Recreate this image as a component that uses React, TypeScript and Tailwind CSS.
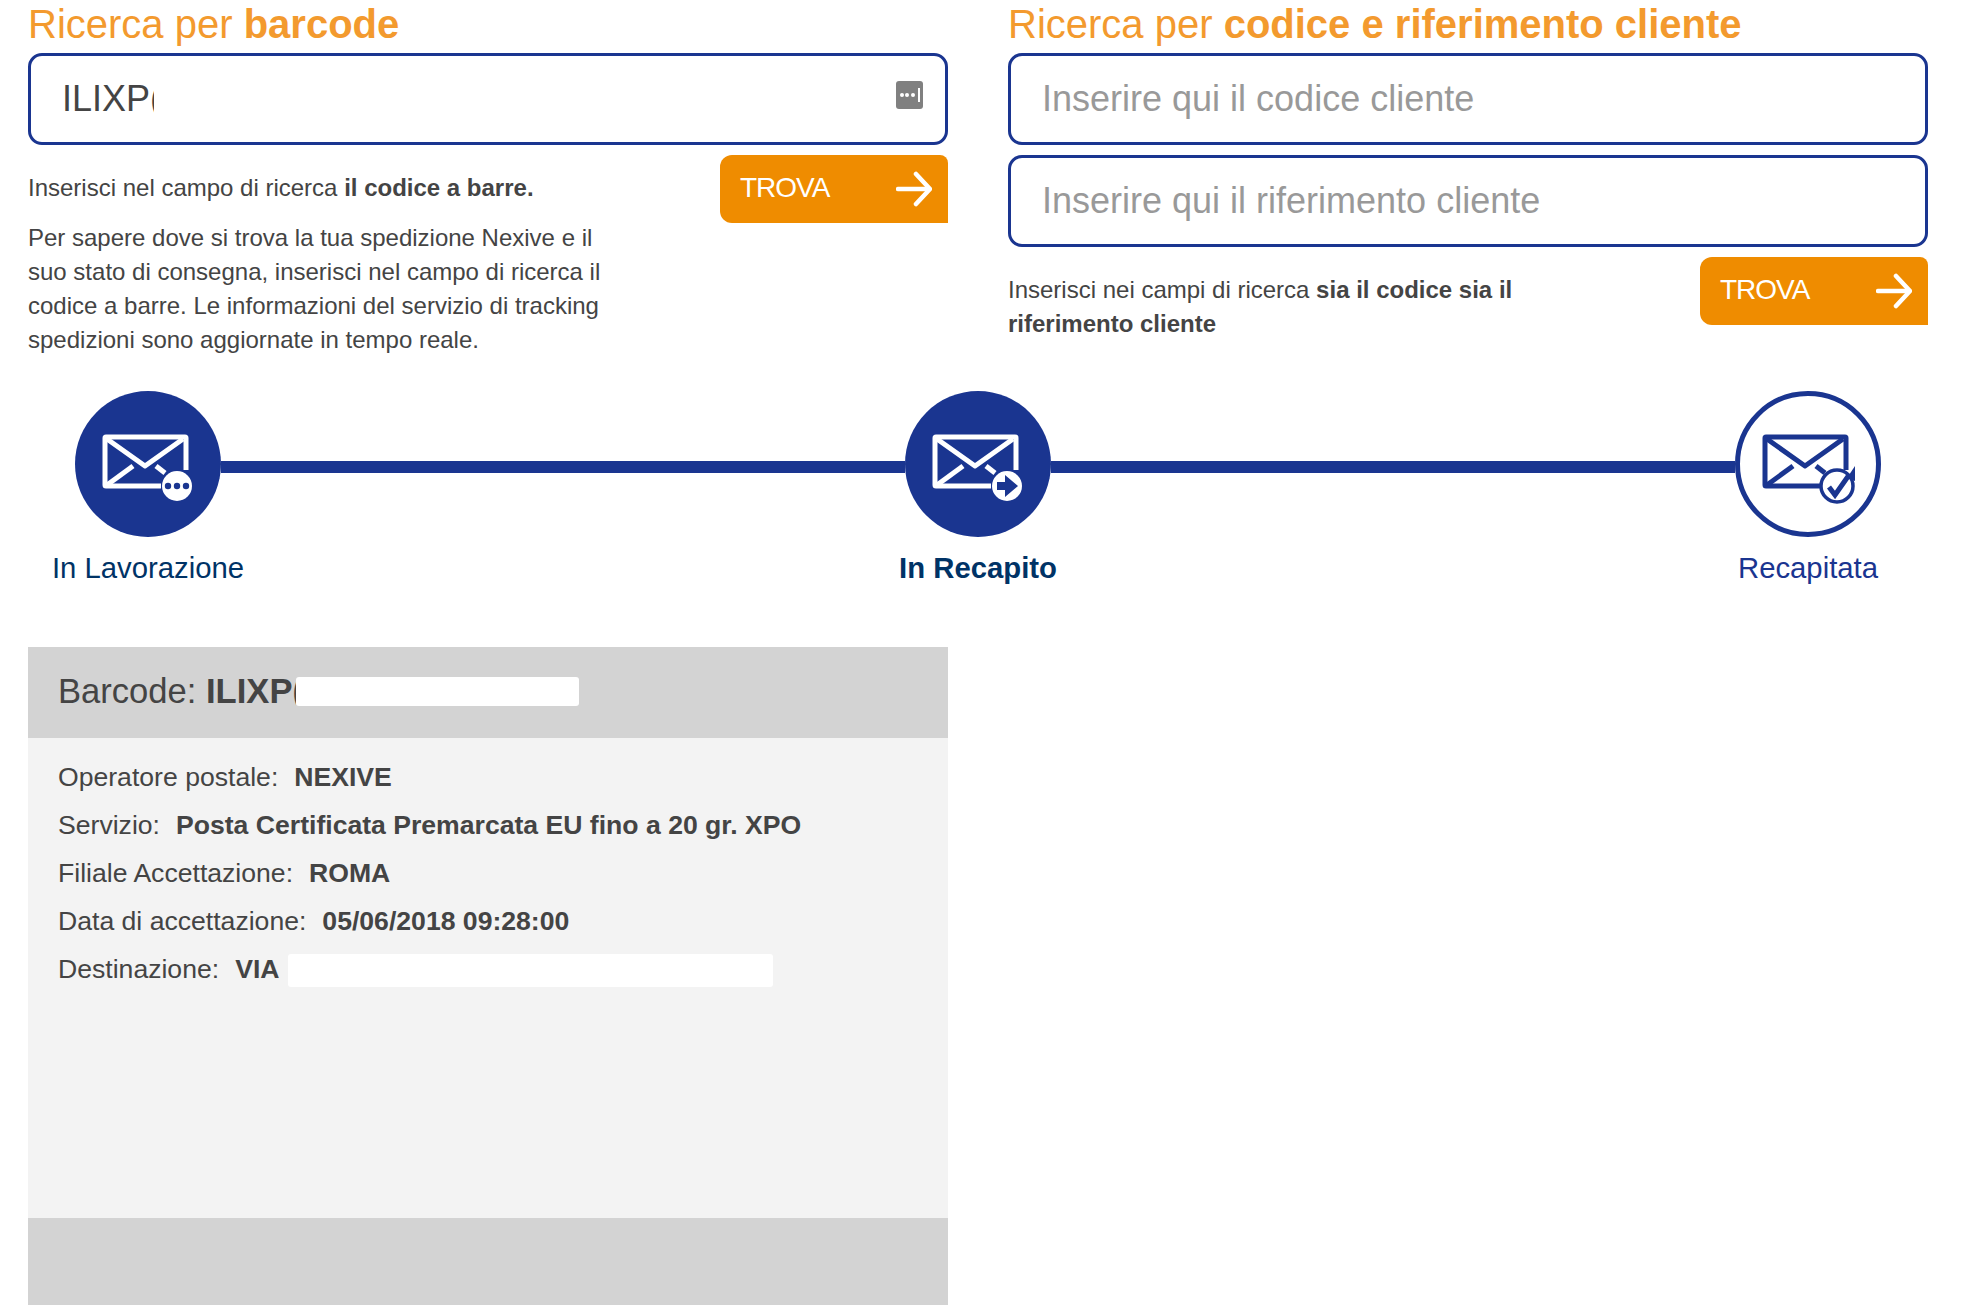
import React from "react";

const BLUE = "#1a3590";

function Envelope({ color }: { color: string }) {
  return (
    <g fill="none" stroke={color} strokeWidth="5" strokeLinejoin="round">
      <path d="M86 95H31a1 1 0 0 1-1-1V47a1 1 0 0 1 1-1h79a1 1 0 0 1 1 1v32" />
      <path d="M32 48l38 27 38-27" />
      <path d="M32 94l26-19" />
      <path d="M81 75l9 7" />
    </g>
  );
}

function StepIcon({ kind }: { kind: "dots" | "arrow" | "check" }) {
  const outline = kind === "check";
  const fg = outline ? BLUE : "#ffffff";
  return (
    <svg width="146" height="146" viewBox="0 0 146 146" className="shrink-0 block">
      {outline ? (
        <circle cx="73" cy="73" r="70.5" fill="#ffffff" stroke={BLUE} strokeWidth="5" />
      ) : (
        <circle cx="73" cy="73" r="73" fill={BLUE} />
      )}
      <Envelope color={fg} />
      {kind === "dots" && (
        <g>
          <circle cx="102" cy="95" r="15" fill="#ffffff" />
          <circle cx="93" cy="95" r="3.2" fill={BLUE} />
          <circle cx="102" cy="95" r="3.2" fill={BLUE} />
          <circle cx="111" cy="95" r="3.2" fill={BLUE} />
        </g>
      )}
      {kind === "arrow" && (
        <g>
          <circle cx="102" cy="95" r="15" fill="#ffffff" />
          <path d="M92 91h8v-7l13 11-13 11v-7h-8z" fill={BLUE} />
        </g>
      )}
      {kind === "check" && (
        <g>
          <circle cx="102" cy="95" r="16" fill="#ffffff" stroke={BLUE} strokeWidth="3.5" />
          <path d="M94 96l6 8 14-20" fill="none" stroke={BLUE} strokeWidth="5" strokeLinejoin="miter" />
          <path d="M112 87l8-12v15z" fill={BLUE} />
        </g>
      )}
    </svg>
  );
}

function TrovaButton() {
  return (
    <button className="w-[228px] h-[68px] shrink-0 bg-[#ef8c00] rounded-tl-[12px] rounded-bl-[12px] rounded-tr-[8px] flex items-center justify-between pl-[20px] pr-[16px] text-white text-[28px] tracking-[-1px]">
      <span className="pb-[2px]">TROVA</span>
      <svg width="36" height="36" viewBox="0 0 36 36" fill="none" stroke="#ffffff" strokeWidth="4.5" strokeLinecap="round" strokeLinejoin="round">
        <path d="M2 18h30" />
        <path d="M20 3l14 15-14 15" />
      </svg>
    </button>
  );
}

function Heading({ plain, bold }: { plain: string; bold: string }) {
  return (
    <h2 className="text-[40px] leading-[48px] mb-[5px] text-[#f39a2e] whitespace-nowrap">
      {plain} <b className="font-bold">{bold}</b>
    </h2>
  );
}

function TextField({ placeholder }: { placeholder: string }) {
  return (
    <input
      readOnly
      placeholder={placeholder}
      className="block w-full h-[92px] rounded-[14px] border-[3px] border-[#1a3590] bg-white pl-[31px] text-[36px] text-[#444444] placeholder:text-[#999999] outline-none"
    />
  );
}

function Row({ label, value, children }: { label: string; value: string; children?: React.ReactNode }) {
  return (
    <div className="h-[48px] flex items-center whitespace-nowrap">
      <span>{label}</span>
      <b className="font-bold ml-[16px]">{value}</b>
      {children}
    </div>
  );
}

export default function App() {
  return (
    <div className="w-[1982px] h-[1305px] overflow-hidden bg-white font-['Liberation_Sans',Arial,sans-serif] text-[#444444] flex flex-col">
      <div className="flex gap-[60px] pl-[28px] pr-[54px]">
        <section className="w-[920px]">
          <Heading plain="Ricerca per" bold="barcode" />
          <div className="h-[92px] rounded-[14px] border-[3px] border-[#1a3590] bg-white pl-[31px] pr-[22px] flex items-center justify-between text-[36px]">
            <span className="w-[92px] overflow-hidden whitespace-nowrap">ILIXP(</span>
            <span className="w-[27px] h-[28px] mb-[8px] rounded-[3px] bg-[#808080] flex items-center justify-center gap-[1.5px]">
              <i className="w-[4px] h-[4px] rounded-full bg-white" />
              <i className="w-[4px] h-[4px] rounded-full bg-white" />
              <i className="w-[4px] h-[4px] rounded-full bg-white" />
              <i className="w-[1.5px] h-[14px] ml-[2px] bg-white" />
            </span>
          </div>
          <div className="mt-[10px] flex justify-between">
            <div className="pt-[16px] w-[600px] text-[24px] leading-[34px]">
              <p className="whitespace-nowrap">
                Inserisci nel campo di ricerca <b className="font-bold">il codice a barre.</b>
              </p>
              <p className="mt-[16px]">
                Per sapere dove si trova la tua spedizione Nexive e il suo stato di consegna, inserisci nel campo di ricerca il codice a barre. Le informazioni del servizio di tracking spedizioni sono aggiornate in tempo reale.
              </p>
            </div>
            <TrovaButton />
          </div>
        </section>

        <section className="w-[920px]">
          <Heading plain="Ricerca per" bold="codice e riferimento cliente" />
          <TextField placeholder="Inserire qui il codice cliente" />
          <div className="mt-[10px]">
            <TextField placeholder="Inserire qui il riferimento cliente" />
          </div>
          <div className="mt-[10px] flex justify-between">
            <p className="pt-[16px] w-[540px] text-[24px] leading-[34px]">
              Inserisci nei campi di ricerca <b className="font-bold">sia il codice sia il riferimento cliente</b>
            </p>
            <TrovaButton />
          </div>
        </section>
      </div>

      <div className="mt-[34px] pl-[75px] pr-[101px]">
        <div className="flex items-center">
          <StepIcon kind="dots" />
          <div className="flex-1 h-[12px] mt-[6px] bg-[#1a3590]" />
          <StepIcon kind="arrow" />
          <div className="flex-1 h-[12px] mt-[6px] bg-[#1a3590]" />
          <StepIcon kind="check" />
        </div>
        <div className="mt-[14px] flex justify-between text-[29.3px] leading-[34px] whitespace-nowrap">
          <div className="w-[146px] flex justify-center text-[#003366]">In Lavorazione</div>
          <div className="w-[146px] flex justify-center font-bold text-[#003366]">In Recapito</div>
          <div className="w-[146px] flex justify-center text-[#1a3590]">Recapitata</div>
        </div>
      </div>

      <div className="mt-[62px] ml-[28px] w-[920px] flex-1 flex flex-col">
        <div className="h-[91px] shrink-0 bg-[#d3d3d3] pl-[30px] pb-[2px] flex items-center text-[34.6px] whitespace-nowrap">
          <span>Barcode:&nbsp;</span>
          <b className="font-bold w-[90px] overflow-hidden">ILIXP(</b>
          <span className="w-[283px] h-[29px] rounded-[3px] bg-white" />
        </div>
        <div className="h-[480px] shrink-0 bg-[#f3f3f3] pl-[30px] pt-[16px] text-[26.6px]">
          <Row label="Operatore postale:" value="NEXIVE" />
          <Row label="Servizio:" value="Posta Certificata Premarcata EU fino a 20 gr. XPO" />
          <Row label="Filiale Accettazione:" value="ROMA" />
          <Row label="Data di accettazione:" value="05/06/2018 09:28:00" />
          <Row label="Destinazione:" value="VIA">
            <span className="w-[485px] h-[33px] mt-[1px] ml-[9px] rounded-[3px] bg-white" />
          </Row>
        </div>
        <div className="flex-1 bg-[#d3d3d3]" />
      </div>
    </div>
  );
}
